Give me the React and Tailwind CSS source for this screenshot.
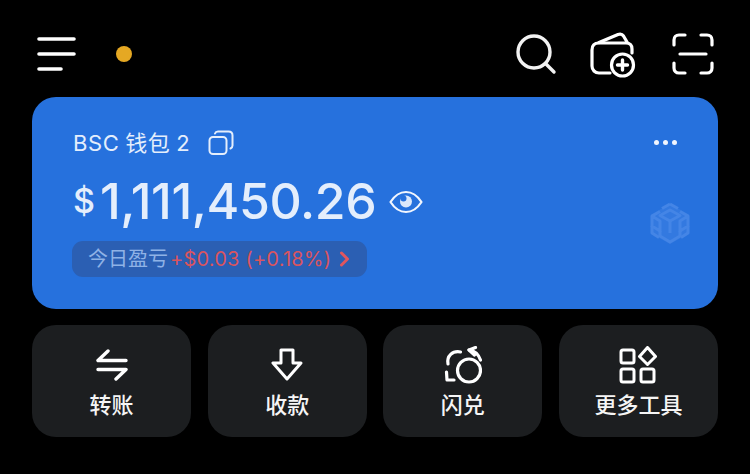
function Menu() {
  return (
    <svg width="40" height="36" viewBox="0 0 40 36" fill="none" stroke="#fff" strokeWidth="3.6" strokeLinecap="round">
      <path d="M2 3H37M2 18H37M2 33H24" />
    </svg>
  );
}
function Search() {
  return (
    <svg width="44" height="44" viewBox="0 0 44 44" fill="none" stroke="#f2f2f2" strokeWidth="3.4" strokeLinecap="round">
      <circle cx="19" cy="20" r="16" />
      <path d="M31 32L39 40" />
    </svg>
  );
}
function WalletPlus() {
  return (
    <svg width="48" height="46" viewBox="0 0 48 46" fill="none" stroke="#fff" strokeWidth="3.2" strokeLinecap="round" strokeLinejoin="round">
      <path d="M20 41H9C5 41 2 38 2 34V18C2 13 5 11 9 11H36C40 11 42 13 42 17V21" />
      <path d="M9 10.5L28 2.5C31 1.5 32.5 2.5 33.5 4L37 10" />
      <circle cx="32.5" cy="33" r="11" />
      <path d="M32.5 28V38M27.5 33H37.5" strokeWidth="3.4" />
    </svg>
  );
}
function Scan() {
  return (
    <svg width="44" height="44" viewBox="0 0 44 44" fill="none" stroke="#fff" strokeWidth="3.2" strokeLinecap="round" strokeLinejoin="round">
      <path d="M14 3H8C5 3 3 5 3 8V13M30 3H36C39 3 41 5 41 8V13M14 41H8C5 41 3 39 3 36V31M30 41H36C39 41 41 39 41 36V31M9 22H35" />
    </svg>
  );
}
function Copy() {
  return (
    <svg width="26" height="26" viewBox="0 0 26 26" fill="none" stroke="#e4eefc" strokeWidth="2" strokeLinejoin="round" strokeLinecap="round">
      <rect x="1.5" y="7" width="17" height="17" rx="3.5" />
      <path d="M7 3.5C7.4 2.4 8.4 1.5 10 1.5H20.5C23 1.5 24.5 3 24.5 5.5V15.5C24.5 17 23.6 18 22.5 18.5" />
    </svg>
  );
}
function Eye() {
  return (
    <svg width="34" height="26" viewBox="0 0 34 26" fill="none">
      <path d="M1.5 13C6 6 11 3 17 3C23 3 28 6 32.5 13C28 20 23 23 17 23C11 23 6 20 1.5 13Z" stroke="#f2f6fe" strokeWidth="2.2" strokeLinejoin="round" />
      <circle cx="17" cy="12.5" r="6" fill="#dce8fb" />
      <circle cx="14.5" cy="9.5" r="3" fill="#2671dd" />
    </svg>
  );
}
function Cube() {
  return (
    <svg width="40" height="44" viewBox="0 0 40 44" fill="none" stroke="#4485e6" strokeWidth="3" strokeLinejoin="round">
      <path d="M20 2L38 12V32L20 42L2 32V12Z" fill="#3379e0" stroke="none" />
      <path d="M20 2L28 6.5M20 2L12 6.5M20 8L30 13.5L20 19L10 13.5Z" />
      <path d="M2 14V24L10 29V19L2 14ZM38 14V24L30 29V19L38 14Z" />
      <path d="M2 14L10 9.5M38 14L30 9.5M20 19V31M10 29V34L20 40L30 34V29" />
      <path d="M2 24V31L9 35.5M38 24V31L31 35.5" />
    </svg>
  );
}
function Transfer() {
  return (
    <svg width="32" height="32" viewBox="0 0 32 32" fill="none" stroke="#fff" strokeWidth="3.4" strokeLinecap="round" strokeLinejoin="round">
      <path d="M12 2L2 11.5H30M20 30L30 20.5H2" />
    </svg>
  );
}
function Receive() {
  return (
    <svg width="32" height="34" viewBox="0 0 32 34" fill="none" stroke="#fff" strokeWidth="3" strokeLinejoin="round">
      <path d="M10 2H22V15H30L16 31L2 15H10Z" />
    </svg>
  );
}
function Swap() {
  return (
    <svg width="38" height="38" viewBox="0 0 38 38" fill="none" stroke="#fff" strokeWidth="3.2" strokeLinecap="round" strokeLinejoin="round">
      <circle cx="25" cy="24.5" r="11.5" />
      <path d="M4 18C2.5 10 8.5 4.5 16.5 6" />
      <path d="M25 4C30 4.5 34.5 8.5 36.5 14" />
      <path d="M31.5 1.5L25 4L30.5 9" />
      <path d="M2.5 26L3 34H10" />
    </svg>
  );
}
function More() {
  return (
    <svg width="38" height="38" viewBox="0 0 38 38" fill="none" stroke="#fff" strokeWidth="3" strokeLinejoin="round">
      <rect x="2" y="4" width="13" height="13" rx="2" />
      <rect x="2" y="23" width="13" height="13" rx="2" />
      <rect x="22" y="23" width="13" height="13" rx="2" />
      <path d="M28.5 1.5L36.5 10.5L28.5 18.5L20.5 10.5Z" />
    </svg>
  );
}

function Action({ icon, label }) {
  return (
    <div className="flex flex-col items-center h-[112px] rounded-[24px] bg-[#1c1e20]">
      <div className="h-[40px] mt-[20px] flex items-center justify-center">{icon}</div>
      <div className="mt-[5px] text-[22px] leading-[30px] font-medium text-[#f5f5f5]">{label}</div>
    </div>
  );
}

export default function App() {
  return (
    <div
      className="w-[750px] h-[474px] bg-black px-[32px] overflow-hidden"
      style={{ fontFamily: 'Inter, "Noto Sans CJK SC", sans-serif' }}
    >
      <div className="h-[97px] flex items-center pl-[5px] pr-[3px] pt-[11px]">
        <Menu />
        <div className="ml-[39px] w-[16px] h-[16px] rounded-full bg-[#e5a823]" />
        <div className="ml-auto flex items-center">
          <Search />
          <div className="ml-[31px] mt-[2px]"><WalletPlus /></div>
          <div className="ml-[33px]"><Scan /></div>
        </div>
      </div>

      <div className="h-[212px] rounded-[24px] bg-[#2671dd] pl-[41px] pr-[28px] pt-[33px] flex">
        <div className="flex-1">
          <div className="flex items-center h-[26px]">
            <span className="text-[22px] leading-[26px] text-[#e4eefc] tracking-[0.6px]" style={{ wordSpacing: '-1px' }}>BSC 钱包 2</span>
            <div className="ml-[18px]"><Copy /></div>
          </div>
          <div className="flex items-center mt-[15px] h-[60px]">
            <span className="text-[34px] leading-[60px] text-[#e4eefc] font-medium">$</span>
            <span className="ml-[5px] text-[50px] leading-[60px] text-[#e4eefc] font-medium tracking-[-0.4px]">1,111,450.26</span>
            <div className="ml-[13px] mt-[2px]"><Eye /></div>
          </div>
          <div className="mt-[10px] -ml-[1px] flex items-center h-[36px] w-[295px] rounded-[11px] bg-[#2b5fb3] pl-[16px] text-[20px]">
            <span className="text-[#8fb2e6]">今日盈亏</span>
            <span className="text-[#d9545f] tracking-[0.2px] ml-[2px]">+$0.03 (+0.18%)</span>
            <svg className="ml-[8px]" width="11" height="16" viewBox="0 0 11 16" fill="none" stroke="#e0565f" strokeWidth="3" strokeLinecap="round" strokeLinejoin="round">
              <path d="M2.5 2L8.5 8L2.5 14" />
            </svg>
          </div>
        </div>
        <div className="flex flex-col items-end">
          <div className="flex gap-[4px] mt-[10px] mr-[13px]">
            <div className="w-[5px] h-[5px] rounded-full bg-[#f0f5fe]" />
            <div className="w-[5px] h-[5px] rounded-full bg-[#f0f5fe]" />
            <div className="w-[5px] h-[5px] rounded-full bg-[#f0f5fe]" />
          </div>
          <div className="mt-[57px]"><Cube /></div>
        </div>
      </div>

      <div className="mt-[16px] grid grid-cols-4 gap-[16.67px]">
        <Action icon={<Transfer />} label="转账" />
        <Action icon={<Receive />} label="收款" />
        <Action icon={<Swap />} label="闪兑" />
        <Action icon={<More />} label="更多工具" />
      </div>
    </div>
  );
}
